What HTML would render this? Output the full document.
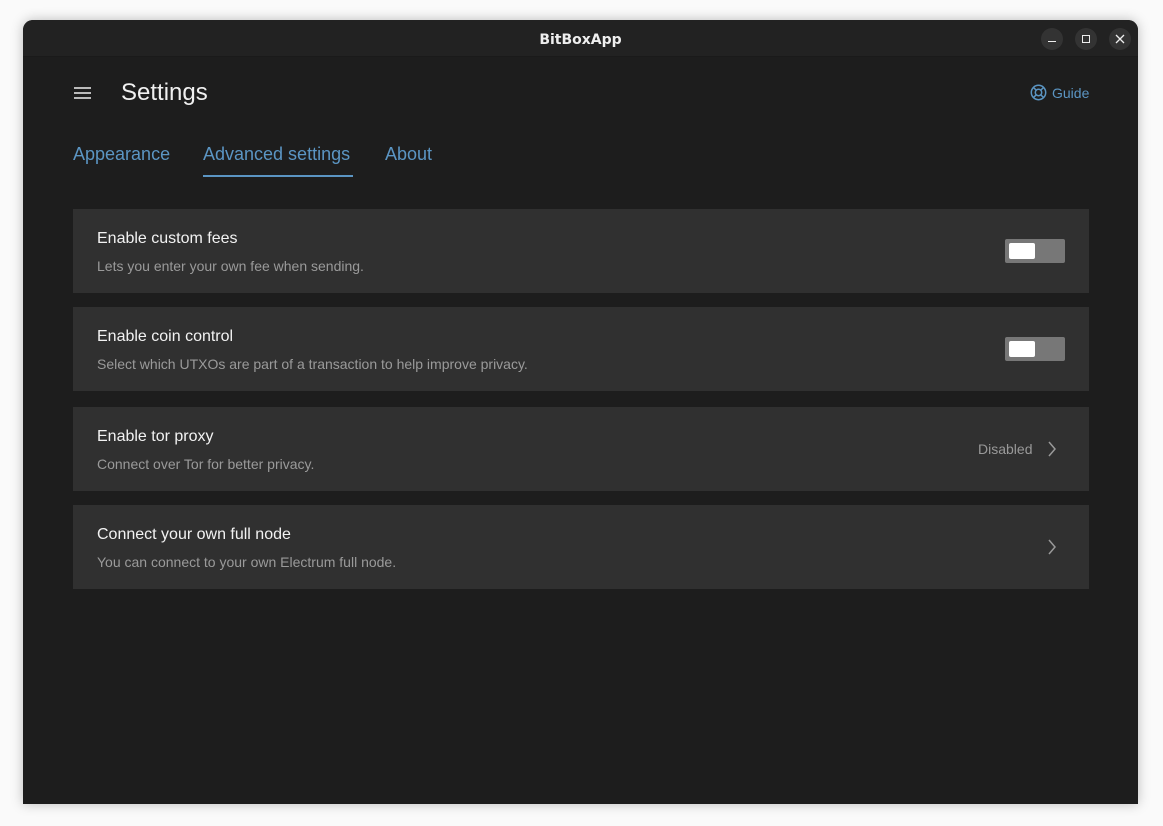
<!DOCTYPE html>
<html><head><style>
*{margin:0;padding:0;box-sizing:border-box}
body{width:1163px;height:826px;background:#fafafa;font-family:"Liberation Sans",sans-serif;position:relative;overflow:hidden}
.win{position:absolute;left:23px;top:20px;width:1115px;height:784px;background:#1d1d1d;border-radius:10px 10px 0 0;overflow:hidden;box-shadow:0 0 12px rgba(0,0,0,.25)}
.tb{height:37px;background:#222;border-bottom:1px solid #1a1a1a;position:relative}
.tb .t{position:absolute;left:0;right:0;top:12px;text-align:center;color:#eee;font-weight:bold;font-size:14px;font-family:"DejaVu Sans",sans-serif}
.cb{position:absolute;top:8px;width:22px;height:22px;border-radius:50%;background:#333}
.p{position:absolute;color:#fff}
.tab{position:absolute;top:124px;font-size:18px;color:#5b95c3}
.card{position:absolute;left:50px;width:1016px;height:84px;background:#303030}
.card .h{position:absolute;left:24px;top:21px;font-size:16px;color:#f2f2f2}
.card .s{position:absolute;left:24px;top:49px;font-size:14px;color:#9a9a9a}
.tg{position:absolute;left:932px;top:30px;width:60px;height:24px;background:#777;border-radius:2px}
.tg i{position:absolute;left:4px;top:4px;width:26px;height:16px;background:#fff;border-radius:2px}
.ch{position:absolute;left:974px;top:34px}
</style></head><body>
<div class="win">
<div class="tb"><div class="t">BitBoxApp</div>
<div class="cb" style="left:1018px"><div style="position:absolute;left:7px;top:13px;width:8px;height:1px;background:#eee"></div></div>
<div class="cb" style="left:1052px"><div style="position:absolute;left:7px;top:7px;width:8px;height:8px;border:1px solid #eee"></div></div>
<div class="cb" style="left:1086px"><svg width="22" height="22" style="position:absolute;left:0;top:0"><path d="M7 7L15 15M15 7L7 15" stroke="#eee" stroke-width="1.3"/></svg></div>
</div>
<svg style="position:absolute;left:51px;top:66px" width="18" height="14"><path d="M0 2H17M0 7H17M0 12H17" stroke="#eee" stroke-width="1.6"/></svg>
<div class="p" style="left:98px;top:59px;font-size:24px;color:#f0f0f0">Settings</div>
<svg style="position:absolute;left:1007px;top:64px" width="17" height="17" viewBox="0 0 17 17" fill="none" stroke="#5b95c3" stroke-width="1.5"><circle cx="8.5" cy="8.5" r="7.2"/><circle cx="8.5" cy="8.5" r="3.2"/><path d="M3.4 3.4L6.2 6.2M13.6 3.4L10.8 6.2M3.4 13.6L6.2 10.8M13.6 13.6L10.8 10.8"/></svg>
<div class="p" style="left:1029px;top:65px;font-size:14px;color:#5b95c3">Guide</div>
<div class="tab" style="left:50px">Appearance</div>
<div class="tab" style="left:180px">Advanced settings</div>
<div style="position:absolute;left:180px;top:155px;width:150px;height:2px;background:#5b95c3"></div>
<div class="tab" style="left:362px">About</div>
<div class="card" style="top:189px"><div class="h">Enable custom fees</div><div class="s">Lets you enter your own fee when sending.</div><div class="tg"><i></i></div></div>
<div class="card" style="top:287px"><div class="h">Enable coin control</div><div class="s">Select which UTXOs are part of a transaction to help improve privacy.</div><div class="tg"><i></i></div></div>
<div class="card" style="top:387px"><div class="h">Enable tor proxy</div><div class="s">Connect over Tor for better privacy.</div><div style="position:absolute;left:905px;top:34px;font-size:14px;color:#999">Disabled</div><svg class="ch" width="10" height="16"><path d="M2 1L8 8L2 15" stroke="#999" stroke-width="1.5" fill="none"/></svg></div>
<div class="card" style="top:485px"><div class="h">Connect your own full node</div><div class="s">You can connect to your own Electrum full node.</div><svg class="ch" width="10" height="16"><path d="M2 1L8 8L2 15" stroke="#999" stroke-width="1.5" fill="none"/></svg></div>
</div>
</body></html>
